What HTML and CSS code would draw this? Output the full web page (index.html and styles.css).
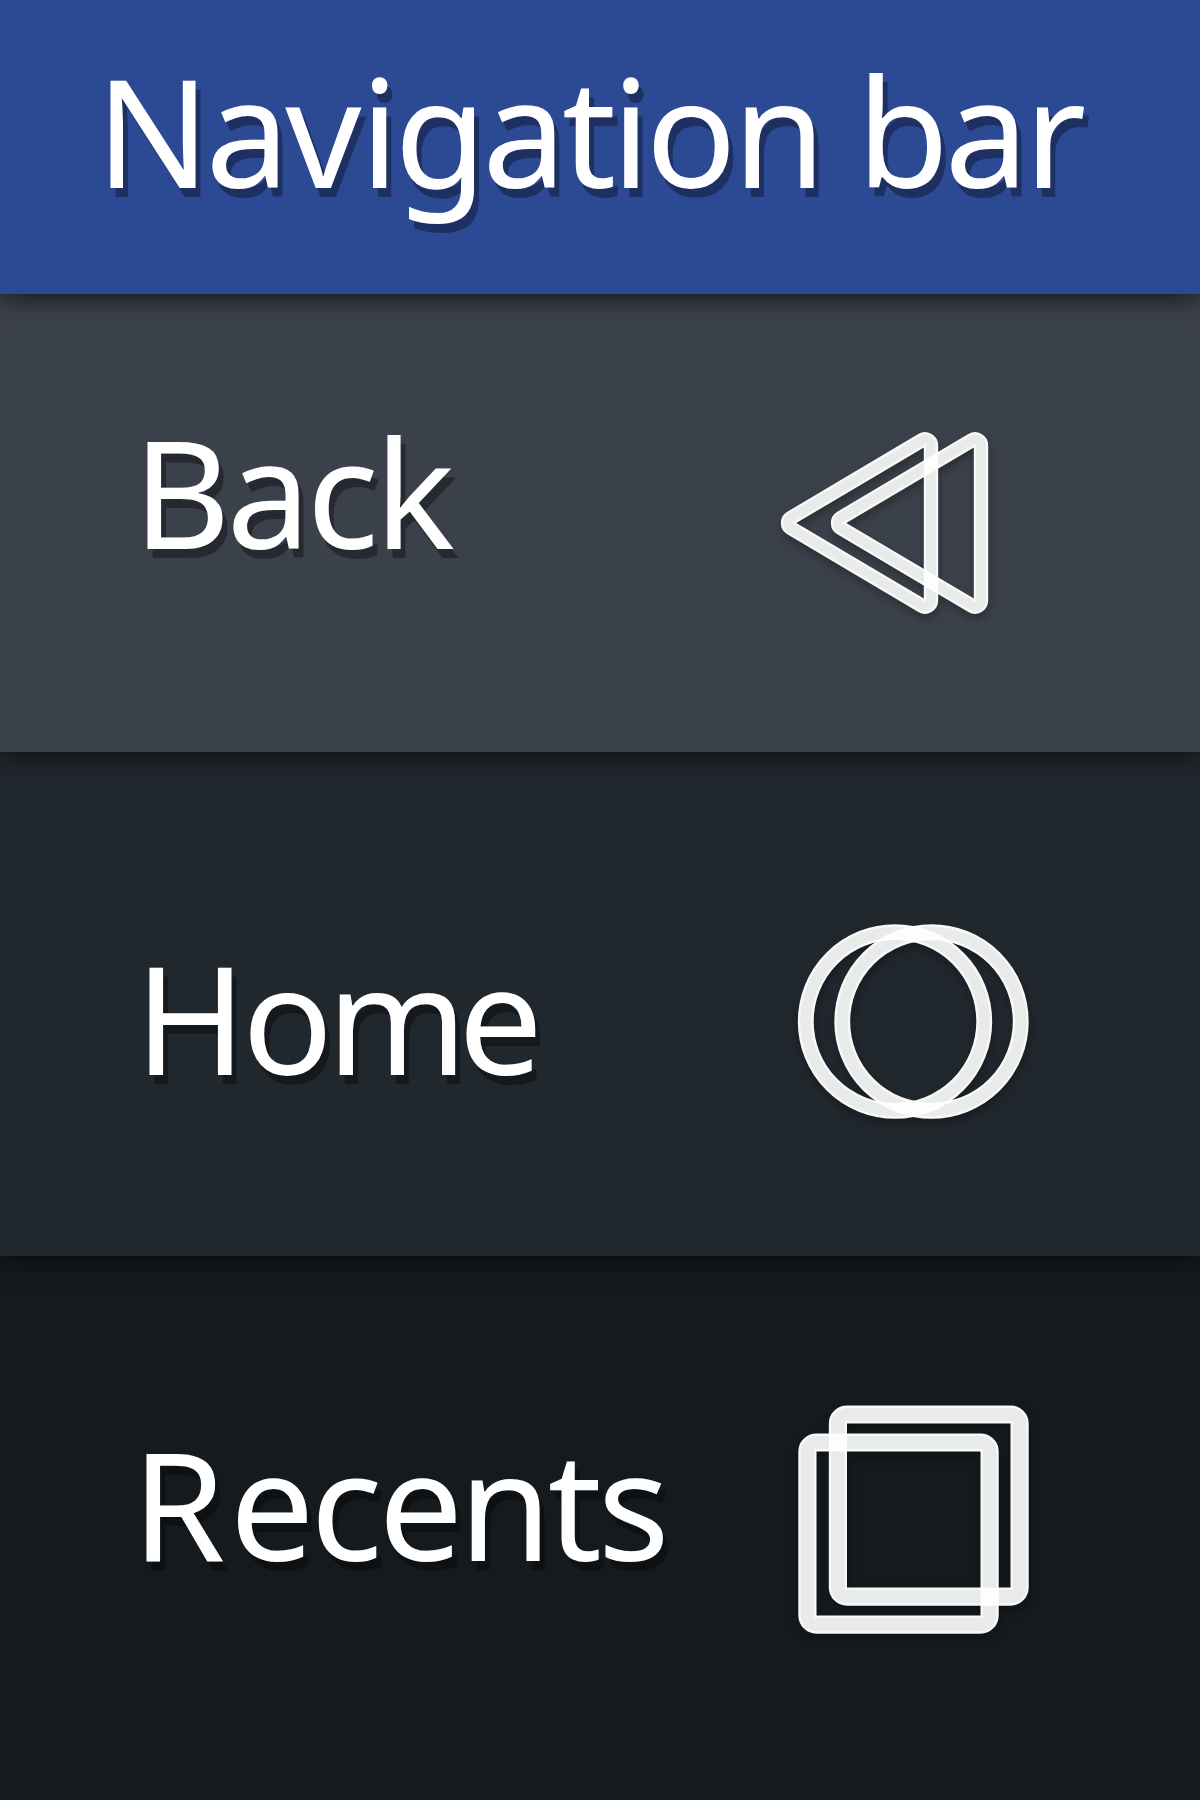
FILE: index.html
```html
<!DOCTYPE html>
<html lang="en">
<head>
<meta charset="utf-8">
<title>Navigation bar</title>
<link rel="stylesheet" href="styles.css">
</head>
<body>
<header class="title-bar"><h1 class="label">Na<span class="kern-v">v</span>igati<span class="kern-n">on</span> bar</h1></header>
<main>
  <section class="row row-back">
    <h2 class="label">Back</h2>
    <svg class="icon" width="270" height="240" viewBox="770 410 270 240">
      <path class="shape" d="M787.9 512.7 918.9 435.1A12 12 0 0 1 937 445.4V600.6A12 12 0 0 1 918.9 610.9L787.9 533.3A12 12 0 0 1 787.9 512.7ZM794 523 925 600.6V445.4Z"/>
      <path class="shape" d="M837.9 512.7 968.9 435.1A12 12 0 0 1 987 445.4V600.6A12 12 0 0 1 968.9 610.9L837.9 533.3A12 12 0 0 1 837.9 512.7ZM844 523 975 600.6V445.4Z"/>
    </svg>
  </section>
  <section class="row row-home">
    <h2 class="label"><span class="kern-h">H</span>o<span class="kern-m">m</span>e</h2>
    <svg class="icon" width="270" height="240" viewBox="770 900 270 240">
      <path class="shape" d="M799 1021.5a96 96 0 1 1 192 0a96 96 0 1 1-192 0ZM812.5 1021.5a82.5 82.5 0 1 0 165 0a82.5 82.5 0 1 0-165 0Z"/>
      <path class="shape" d="M835.5 1021.5a96 96 0 1 1 192 0a96 96 0 1 1-192 0ZM849 1021.5a82.5 82.5 0 1 0 165 0a82.5 82.5 0 1 0-165 0Z"/>
    </svg>
  </section>
  <section class="row row-recents">
    <h2 class="label"><span class="kern-r">R</span>ecents</h2>
    <svg class="icon" width="270" height="270" viewBox="770 1385 270 270">
      <path class="shape" d="M816.5 1434.7H980.5a17 17 0 0 1 17 17V1615.5a17 17 0 0 1-17 17H816.5a17 17 0 0 1-17-17V1451.7a17 17 0 0 1 17-17ZM815.3 1450.3V1616.7H981.7V1450.3Z"/>
      <path class="shape" d="M847 1406.7H1010.5a17 17 0 0 1 17 17V1587.5a17 17 0 0 1-17 17H847a17 17 0 0 1-17-17V1423.7a17 17 0 0 1 17-17ZM845.8 1422.3V1588.7H1011.7V1422.3Z"/>
    </svg>
  </section>
</main>
</body>
</html>
```
FILE: styles.css
```css
* { box-sizing: border-box; }
body {
  margin: 0;
  color: #fff;
  font-family: "Noto Sans", "Open Sans", sans-serif;
  background: #141a1d;
}
.title-bar, .row {
  position: relative;
  box-shadow: 0 4px 24px rgba(0, 0, 0, .62);
}
.title-bar {
  z-index: 4;
  height: 294px;
  padding: 55px 0 0 96px;
  background: #2c4994;
}
.label {
  margin: 0;
  font-size: 150px;
  font-weight: 400;
  line-height: 150px;
  letter-spacing: -4px;
  white-space: nowrap;
  text-shadow: 5px 9px 0 rgba(0, 0, 0, .34);
}
.title-bar .label { letter-spacing: -4.5px; }
.label .kern-v { letter-spacing: -1px; }
.label .kern-n { letter-spacing: -3.5px; }
.label .kern-h { letter-spacing: -4px; }
.label .kern-m { letter-spacing: -9px; }
.label .kern-r { letter-spacing: 4.5px; }
.row {
  display: flex;
  justify-content: space-between;
  align-items: flex-start;
  padding: 0 160px 0 133px;
}
.row-back { z-index: 3; height: 458px; background: #3b414a; }
.row-back .label { margin-top: 122px; }
.row-back .icon { margin-top: 116px; }
.row-home { z-index: 2; height: 504px; padding-left: 135px; background: #20272d; }
.row-home .label { margin-top: 190px; letter-spacing: -6px; }
.row-home .icon { margin-top: 148px; }
.row-recents { z-index: 1; height: 544px; padding-left: 132px; background: #141a1d; }
.row-recents .label { margin-top: 172px; }
.row-recents .icon { margin-top: 129px; }
.icon {
  display: block;
  flex: none;
  filter: drop-shadow(1px 5px 4px rgba(0, 0, 0, .28));
}
.shape {
  fill: #e9eaea;
  fill-rule: evenodd;
  stroke: #f8f8f8;
  stroke-width: 2.4;
  mix-blend-mode: screen;
}
```
